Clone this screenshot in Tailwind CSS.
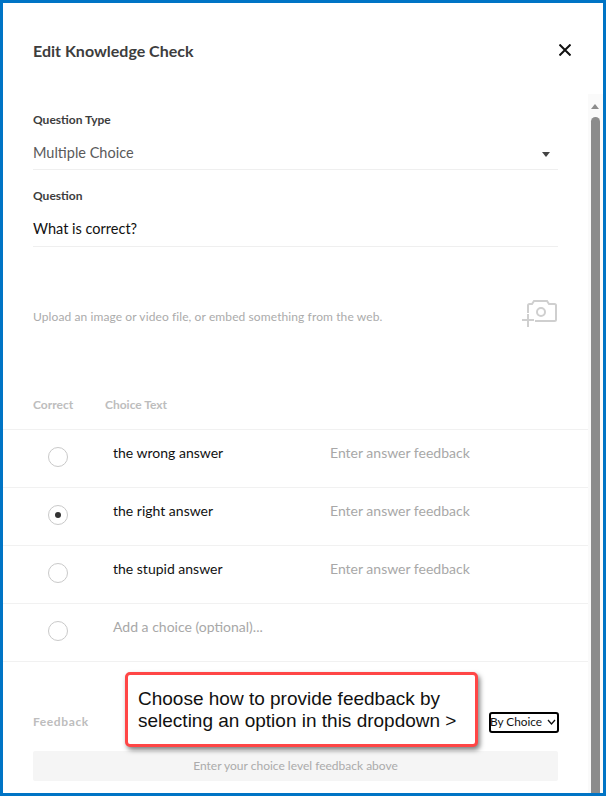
<!DOCTYPE html>
<html>
<head>
<meta charset="utf-8">
<script src="https://cdn.jsdelivr.net/npm/@tailwindcss/browser@4"></script>
</head>
<body class="m-0">
<div class="relative w-[606px] h-[796px] overflow-hidden bg-white border-[3px] border-[#0074c5] font-['Lato','Liberation_Sans',sans-serif]">
  <div class="flex items-start justify-between pl-[30px] pr-[32px] h-[99px]">
    <h1 class="mt-[38px] text-[16px] leading-[19px] font-bold text-[#3d3d3d]">Edit Knowledge Check</h1>
    <svg class="mt-[41px]" width="12" height="12" viewBox="0 0 12 12"><path d="M0.5 0.5L11.5 11.5M11.5 0.5L0.5 11.5" stroke="#111" stroke-width="2"/></svg>
  </div>

  <div class="absolute right-[0px] top-[91px] w-[15px] h-[702px] bg-[#fafafa]">
    <div class="mt-[10px] ml-[3px] w-0 h-0 border-x-[4.5px] border-x-transparent border-b-[5px] border-b-[#8c8c8c]"></div>
    <div class="mt-[8px] ml-[3px] w-[9px] h-[700px] rounded-t-full bg-[#8c8c8c]"></div>
  </div>

  <div class="pl-[30px] w-[555px]">
    <div class="text-[12px] leading-[16px] font-bold text-[#3d3d3d] mt-[10px]">Question Type</div>
    <div class="flex items-center justify-between h-[41px] border-b border-[#efefef] text-[14.500px] text-[#5a5a5a] pr-[8px] mt-[1px] pt-[8px]">
      <span>Multiple Choice</span>
      <span class="mt-[2px] w-0 h-0 border-x-[4px] border-x-transparent border-t-[5px] border-t-[#444]"></span>
    </div>
    <div class="text-[12px] leading-[16px] font-bold text-[#3d3d3d] mt-[18px]">Question</div>
    <div class="flex items-center h-[42px] border-b border-[#efefef] text-[14.500px] text-[#111] mt-[1px] pt-[7px]">What is correct?</div>
    <div class="flex items-center justify-between h-[70px] mt-[35px]">
      <span class="text-[12px] text-[#ababab] tracking-[0.1px]">Upload an image or video file, or embed something from the web.</span>
      <svg class="mr-[1px] mt-[-6px]" width="36" height="28" viewBox="0 0 36 28" fill="none" stroke="#cfcfcf" stroke-width="2"><path d="M7 13V5.500a1.500 1.500 0 0 1 1.500-1.500H11L13 1H26L28 4H33.500a1.500 1.500 0 0 1 1.500 1.500V19.500a1.500 1.500 0 0 1-1.500 1.500H14"/><circle cx="20" cy="12" r="4"/><path d="M1 20H13M7 14V27"/></svg>
    </div>
    <div class="flex h-[20px] mt-[43px] text-[12px] font-bold text-[#bdbdbd] leading-[20px]">
      <span class="w-[72px]">Correct</span><span>Choice Text</span>
    </div>
  </div>

  <div class="mt-[14px] w-[585px]">
    <div class="flex items-center h-[58px] border-t border-[#f1f1f1]">
      <span class="ml-[45px] w-[20px] h-[20px] rounded-full border border-[#c9c9c9] mt-[-4px]"></span>
      <span class="ml-[45px] w-[217px] text-[14px] text-[#111] mt-[-13px]">the wrong answer</span>
      <span class="text-[14px] text-[#a8a8a8] mt-[-13px]">Enter answer feedback</span>
    </div>
    <div class="flex items-center h-[58px] border-t border-[#f1f1f1]">
      <span class="ml-[45px] w-[20px] h-[20px] rounded-full border border-[#c9c9c9] mt-[-4px] flex items-center justify-center"><span class="w-[6px] h-[6px] rounded-full bg-[#333]"></span></span>
      <span class="ml-[45px] w-[217px] text-[14px] text-[#111] mt-[-13px]">the right answer</span>
      <span class="text-[14px] text-[#a8a8a8] mt-[-13px]">Enter answer feedback</span>
    </div>
    <div class="flex items-center h-[58px] border-t border-[#f1f1f1]">
      <span class="ml-[45px] w-[20px] h-[20px] rounded-full border border-[#c9c9c9] mt-[-4px]"></span>
      <span class="ml-[45px] w-[217px] text-[14px] text-[#111] mt-[-13px]">the stupid answer</span>
      <span class="text-[14px] text-[#a8a8a8] mt-[-13px]">Enter answer feedback</span>
    </div>
    <div class="flex items-center h-[58px] border-t border-[#f1f1f1]">
      <span class="ml-[45px] w-[20px] h-[20px] rounded-full border border-[#c9c9c9] mt-[-4px]"></span>
      <span class="ml-[45px] text-[14px] text-[#a8a8a8] mt-[-13px]">Add a choice (optional)...</span>
    </div>
    <div class="border-t border-[#f1f1f1] pl-[30px] pr-[30px]">
      <div class="flex items-center justify-between h-[89px] pt-[31px]">
        <span class="text-[12px] font-bold text-[#bdbdbd] tracking-[0.6px]">Feedback</span>
        <span class="mr-[-1px] flex items-center justify-between w-[70px] h-[21px] rounded-[3px] border-2 border-black text-[11.800px] text-[#111] pr-[1px]"><span class="ml-[-1px]">By Choice</span><svg width="9" height="6" viewBox="0 0 9 6" fill="none" stroke="#111" stroke-width="1.300"><path d="M1 1L4.500 5L8 1"/></svg></span>
      </div>
      <div class="flex items-center justify-center h-[30px] rounded-[2px] bg-[#f5f5f5] text-[12px] text-[#ababab]">Enter your choice level feedback above</div>
    </div>
  </div>

  <div class="absolute left-[122px] top-[669px] w-[353px] h-[75px] rounded-[5px] border-[3px] border-[#ff4646] bg-white shadow-[2px_3px_5px_rgba(0,0,0,0.5)] pl-[10px] pt-[13px] font-['Liberation_Sans',sans-serif] text-[19px] leading-[22px] text-[#111]">
    Choose how to provide feedback by<br>selecting an option in this dropdown &gt;
  </div>
</div>
</body>
</html>
